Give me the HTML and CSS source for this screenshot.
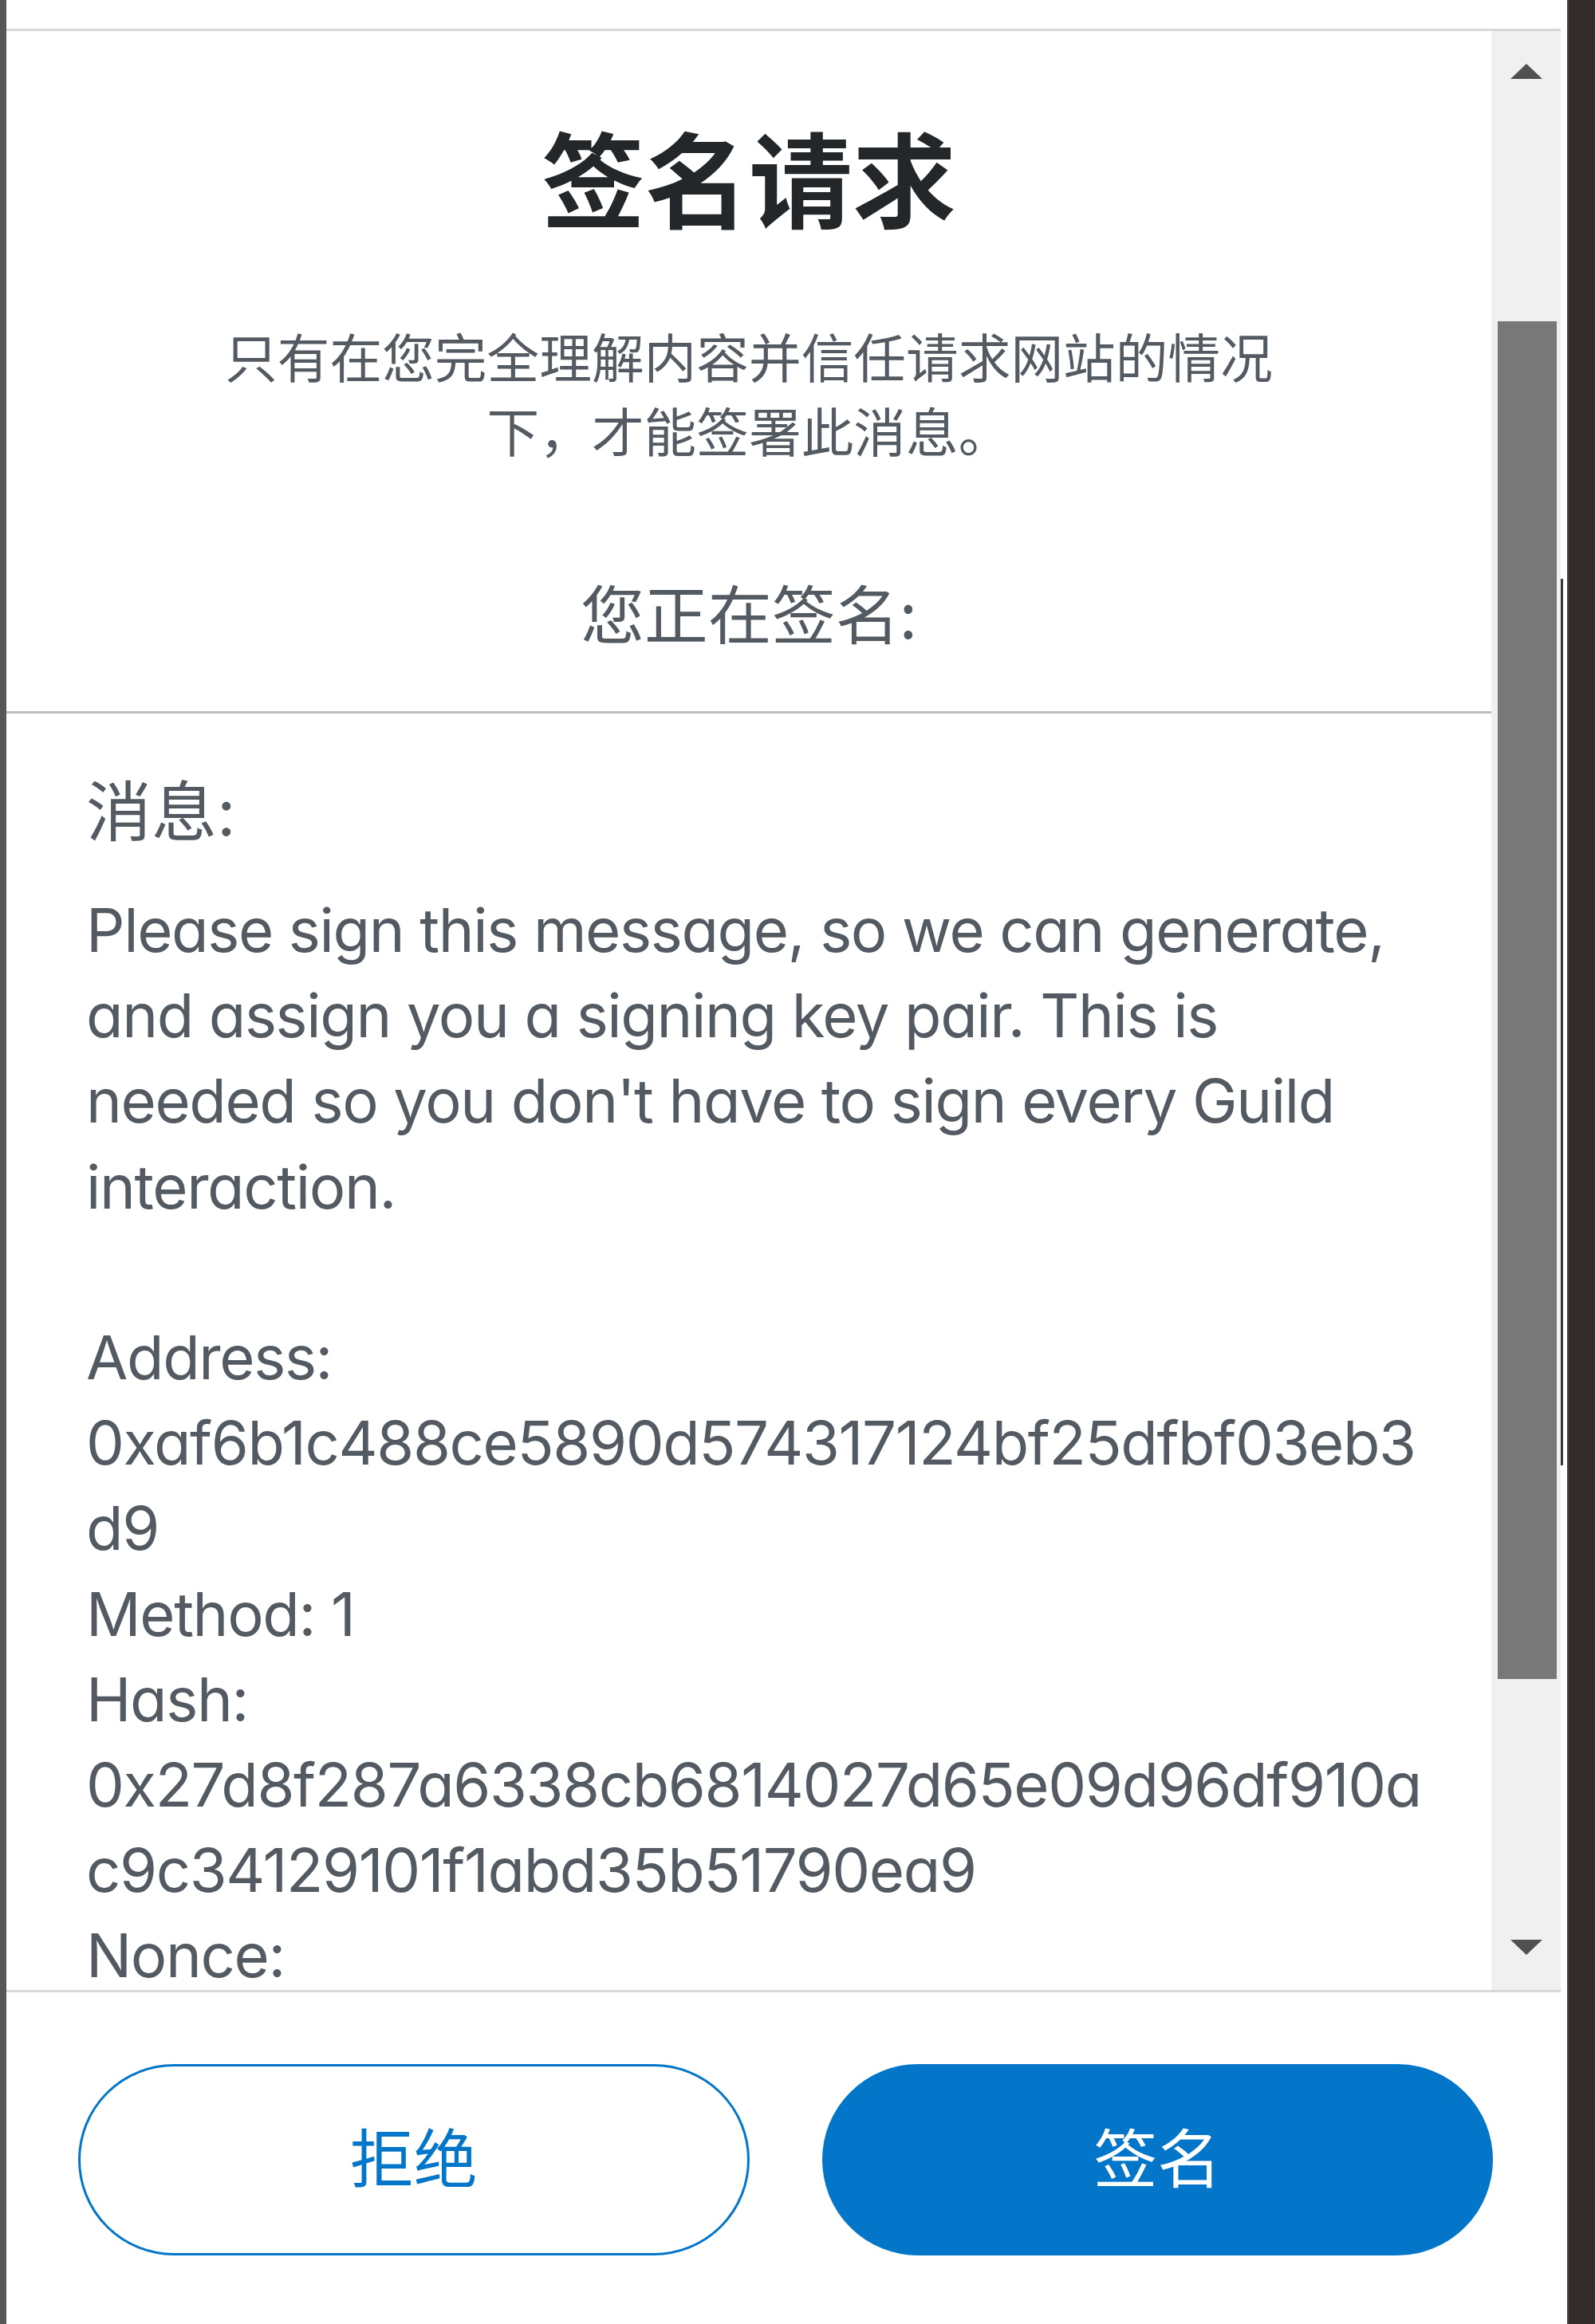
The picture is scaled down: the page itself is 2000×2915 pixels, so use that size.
FILE: index.html
```html
<!DOCTYPE html>
<html lang="zh-CN">
<head>
<meta charset="utf-8">
<title>签名请求</title>
<link rel="stylesheet" href="styles.css">
</head>
<body>
<div class="window">
  <div class="edge-left"></div>
  <div class="popup">
    <div class="topbar"></div>
    <div class="body">
      <div class="content">
        <h1 class="title">签名请求</h1>
        <p class="notice">只有在您完全理解内容并信任请求网站的情况下，才能签署此消息。</p>
        <div class="signing">您正在签名:</div>
        <div class="message">
          <div class="row-title">消息:</div>
          <div class="row-value">Please sign this message, so we can generate, and assign you a signing key pair. This is needed so you don't have to sign every Guild interaction.

Address: 0xaf6b1c488ce5890d574317124bf25dfbf03eb3d9
Method: 1
Hash: 0x27d8f287a6338cb6814027d65e09d96df910ac9c34129101f1abd35b51790ea9
Nonce:</div>
        </div>
      </div>
      <div class="scrollbar">
        <div class="arrow-up"></div>
        <div class="thumb"></div>
        <div class="arrow-down"></div>
      </div>
    </div>
    <div class="footer">
      <button class="btn btn-secondary">拒绝</button>
      <button class="btn btn-primary">签名</button>
    </div>
  </div>
  <div class="gap"><div class="gap-line"></div></div>
  <div class="edge-right"></div>
</div>
</body>
</html>
```
FILE: styles.css
```css
html, body {
  margin: 0;
  padding: 0;
  background: #ffffff;
}
body {
  width: 2000px;
  height: 2915px;
  overflow: hidden;
  font-family: "Inter", "Noto Sans CJK SC", sans-serif;
  font-feature-settings: "cv11";
}
.window {
  display: flex;
  height: 2915px;
}
.edge-left {
  width: 8px;
  flex: none;
  background: #575757;
}
.popup {
  width: 1949px;
  flex: none;
  display: flex;
  flex-direction: column;
  background: #ffffff;
}
.topbar {
  height: 39px;
  flex: none;
  box-sizing: border-box;
  border-bottom: 3px solid #d6d9dc;
}
.body {
  flex: 1;
  min-height: 0;
  display: flex;
  overflow: hidden;
}
.content {
  flex: 1;
  min-width: 0;
  overflow: hidden;
}
.title {
  margin: 0;
  padding-top: 102px;
  font-family: "Noto Sans CJK SC", sans-serif;
  font-size: 130px;
  line-height: 156px;
  font-weight: 700;
  color: #24272a;
  text-align: center;
}
.notice {
  margin: 102px auto 0;
  width: 1345px;
  font-family: "Noto Sans CJK SC", sans-serif;
  font-size: 65.7px;
  line-height: 93px;
  color: #535a61;
  text-align: center;
}
.signing {
  margin-top: 125px;
  padding-bottom: 70px;
  border-bottom: 3px solid #bbc0c5;
  font-family: "Noto Sans CJK SC", sans-serif;
  font-size: 80px;
  line-height: 112px;
  color: #535a61;
  text-align: center;
}
.message {
  padding: 70px 78px 0 100px;
  color: #535a61;
}
.row-title {
  font-size: 82px;
  line-height: 108px;
}
.row-value {
  margin-top: 40px;
  font-size: 76px;
  line-height: 107.2px;
  letter-spacing: -1.4px;
  white-space: pre-wrap;
  overflow-wrap: anywhere;
}
.scrollbar {
  width: 87px;
  flex: none;
  background: #f0f0f0;
  display: flex;
  flex-direction: column;
  align-items: center;
}
.arrow-up {
  margin-top: 41px;
  width: 0;
  height: 0;
  border-left: 20px solid transparent;
  border-right: 20px solid transparent;
  border-bottom: 19px solid #505050;
}
.thumb {
  margin-top: 304px;
  width: 74px;
  height: 1703px;
  margin-left: 3px;
  background: #787878;
}
.arrow-down {
  margin-top: 327px;
  width: 0;
  height: 0;
  border-left: 20px solid transparent;
  border-right: 20px solid transparent;
  border-top: 19px solid #505050;
}
.footer {
  height: 419px;
  flex: none;
  box-sizing: border-box;
  border-top: 3px solid #d6d9dc;
  display: flex;
  gap: 91px;
  padding: 90px 85px 0 90px;
}
.btn {
  flex: 1;
  height: 240px;
  padding: 0 0 14px;
  border-radius: 120px;
  border: 3px solid #0376c9;
  font-family: "Noto Sans CJK SC", sans-serif;
  font-size: 80px;
  cursor: pointer;
}
.btn-secondary {
  background: #ffffff;
  color: #0376c9;
}
.btn-primary {
  background: #0376c9;
  color: #ffffff;
}
.gap {
  width: 8px;
  flex: none;
  background: #ffffff;
}
.gap-line {
  margin-top: 726px;
  width: 3px;
  height: 1112px;
  background: #3a3a3a;
}
.edge-right {
  flex: 1;
  background: #322d2b;
  border-left: 2px solid #4a4644;
}
```
